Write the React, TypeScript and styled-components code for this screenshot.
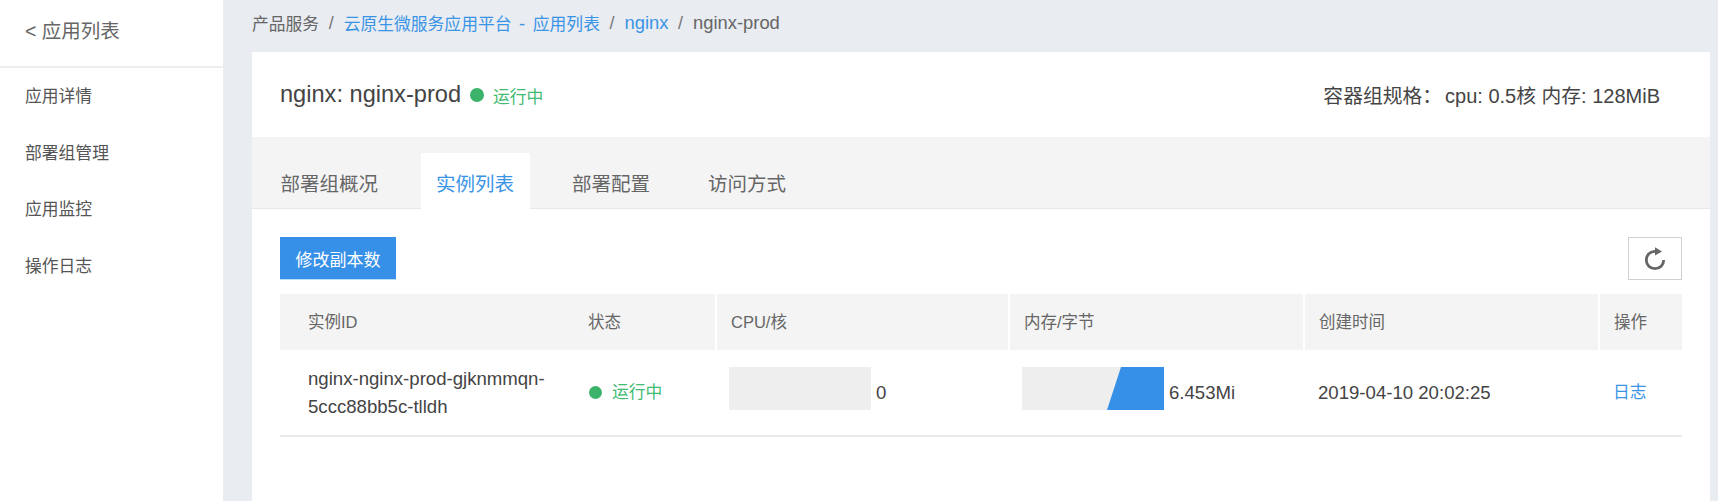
import styled, { createGlobalStyle } from "styled-components";

const GlobalStyle = createGlobalStyle`
    html, body {
        margin: 0;
        padding: 0;
        height: 100%;
        overflow: hidden;
    }
    body {
        font-family: "Liberation Sans", "Noto Sans CJK SC", sans-serif;
        color: #444;
    }
`;

const Page = styled.div`
    display: flex;
    width: 1718px;
    height: 501px;
    overflow: hidden;
    background: #e9ecf1;
`;

const Sidebar = styled.aside`
    width: 223px;
    flex-shrink: 0;
    background: #fff;
`;

const BackLink = styled.div`
    height: 66px;
    box-sizing: content-box;
    padding-left: 25px;
    display: flex;
    align-items: center;
    font-size: 19.5px;
    line-height: 60px;
    color: #666;
    border-bottom: 2px solid #eeeeee;

    span {
        margin-top: -4px;
    }
`;

const NavList = styled.ul`
    list-style: none;
    margin: 0;
    padding: 0;
`;

const NavItem = styled.li`
    height: 56.5px;
    box-sizing: border-box;
    padding: 0 0 2px 25px;
    display: flex;
    align-items: center;
    font-size: 16.8px;
    color: #555;
`;

const Main = styled.main`
    flex: 1;
    padding: 0 8px 0 29px;
    min-width: 0;
`;

// 영문은 한자보다 조금 크게 보인다
const Breadcrumb = styled.nav`
    height: 52px;
    padding-bottom: 6px;
    box-sizing: border-box;
    display: flex;
    align-items: center;
    font-size: 16.8px;
    color: #666;
`;

const Crumb = styled.span<{ $link?: boolean; $latin?: boolean }>`
    font-size: ${(props) => (props.$latin ? "18.4px" : "inherit")};
    color: ${(props) => (props.$link ? "#3a94e6" : "#666")};
`;

const Slash = styled.span`
    margin: 0 10px 0 9.5px;
    font-size: 18px;
    color: #777;
`;

const Dash = styled.span`
    margin: 0 7.6px;
    font-size: 18.4px;
`;

const Card = styled.section`
    background: #fff;
    height: 449px;
`;

const CardHead = styled.header`
    height: 85px;
    padding: 0 50px 0 28px;
    display: flex;
    align-items: center;
    justify-content: space-between;
`;

const TitleGroup = styled.div`
    display: flex;
    align-items: center;
`;

const Title = styled.h1`
    margin: 0 9px 0 0;
    font-size: 23.6px;
    font-weight: 400;
    color: #444;
`;

const Dot = styled.i<{ $size: number }>`
    display: block;
    width: ${(props) => props.$size}px;
    height: ${(props) => props.$size}px;
    border-radius: 50%;
    background: #3bb36a;
`;

const StatusText = styled.span`
    font-size: 16.8px;
    color: #3fbb72;
`;

const TitleStatus = styled(StatusText)`
    margin-left: 9px;
    padding-top: 3px;
`;

const Spec = styled.div`
    font-size: 20px;
    color: #444;
`;

const SpecLabel = styled.span<{ $gap?: number }>`
    margin-right: ${(props) => props.$gap ?? 0}px;
    font-size: 19.8px;
`;

const TabBar = styled.div`
    height: 72px;
    box-sizing: border-box;
    padding-left: 13px;
    display: flex;
    align-items: flex-end;
    background: #f4f4f5;
    border-bottom: 1px solid #e8e8e8;
`;

const Tab = styled.div<{ $active?: boolean }>`
    height: 56px;
    box-sizing: border-box;
    margin-right: 27px;
    margin-bottom: -1px;
    padding: 2px 15.5px 0;
    display: flex;
    align-items: center;
    font-size: 19.5px;
    color: ${(props) => (props.$active ? "#3a94e6" : "#666")};
    background: ${(props) => (props.$active ? "#fff" : "transparent")};
`;

const Content = styled.div`
    padding: 28px 28px 0;
`;

const Toolbar = styled.div`
    height: 57px;
    display: flex;
    align-items: flex-start;
    justify-content: space-between;
`;

const PrimaryButton = styled.button`
    width: 116px;
    height: 43px;
    padding: 0;
    border: none;
    border-bottom: 1px solid #b8dcf8;
    background: #3790e8;
    color: #fff;
    font-family: inherit;
    font-size: 17px;
`;

const IconButton = styled.button`
    width: 54px;
    height: 43px;
    padding: 0;
    display: flex;
    align-items: center;
    justify-content: center;
    background: #fff;
    border: 1.5px solid #d0d0d0;
`;

const Table = styled.table`
    width: 1402px;
    table-layout: fixed;
    border-collapse: collapse;
`;

const HeadCell = styled.th<{ $width: number; $first?: boolean; $plain?: boolean }>`
    width: ${(props) => props.$width}px;
    height: 56px;
    padding: 0 0 3px ${(props) => (props.$first ? 28 : 14)}px;
    box-sizing: border-box;
    background: #f4f4f4;
    border-right: 2px solid ${(props) => (props.$plain ? "#f4f4f4" : "#fff")};
    text-align: left;
    font-size: 16.5px;
    font-weight: 400;
    color: #666;

    &:last-child {
        border-right: none;
    }
`;

const BodyRow = styled.tr`
    border-bottom: 2px solid #eaeaea;
`;

const Cell = styled.td<{ $first?: boolean }>`
    height: 86px;
    padding: 0 0 0 ${(props) => (props.$first ? 28 : 14)}px;
    box-sizing: border-box;
    font-size: 18.6px;
    line-height: 28px;
    color: #444;
`;

const StatusCell = styled.div`
    display: flex;
    align-items: center;
    gap: 10px;
    margin-left: 2px;
`;

const Meter = styled.div`
    display: flex;
    align-items: center;
    gap: 5px;
    margin-left: -1px;
`;

const MeterChart = styled.svg`
    display: block;
    width: 142px;
    height: 43px;
    margin-bottom: 8px;
    background: #eeeeee;
`;

const LogLink = styled.span`
    font-size: 16.8px;
    color: #3a94e6;
`;

const columns = [
    { label: "实例ID", width: 293 },
    { label: "状态", width: 143 },
    { label: "CPU/核", width: 293 },
    { label: "内存/字节", width: 295 },
    { label: "创建时间", width: 295 },
    { label: "操作", width: 83 },
];

const navItems = ["应用详情", "部署组管理", "应用监控", "操作日志"];
const tabs = ["部署组概况", "实例列表", "部署配置", "访问方式"];

function App() {
    return (
        <Page>
            <GlobalStyle />
            <Sidebar>
                <BackLink>
                    <span>&lt; 应用列表</span>
                </BackLink>
                <NavList>
                    {navItems.map((item) => (
                        <NavItem key={item}>{item}</NavItem>
                    ))}
                </NavList>
            </Sidebar>
            <Main>
                <Breadcrumb>
                    <Crumb>产品服务</Crumb>
                    <Slash>/</Slash>
                    <Crumb $link>
                        云原生微服务应用平台<Dash>-</Dash>应用列表
                    </Crumb>
                    <Slash>/</Slash>
                    <Crumb $link $latin>
                        nginx
                    </Crumb>
                    <Slash>/</Slash>
                    <Crumb $latin>nginx-prod</Crumb>
                </Breadcrumb>
                <Card>
                    <CardHead>
                        <TitleGroup>
                            <Title>nginx: nginx-prod</Title>
                            <Dot $size={14} />
                            <TitleStatus>运行中</TitleStatus>
                        </TitleGroup>
                        <Spec>
                            <SpecLabel $gap={3}>容器组规格：</SpecLabel>cpu: 0.5<SpecLabel>核 内存</SpecLabel>: 128MiB
                        </Spec>
                    </CardHead>
                    <TabBar>
                        {tabs.map((tab) => (
                            <Tab key={tab} $active={tab === "实例列表"}>
                                {tab}
                            </Tab>
                        ))}
                    </TabBar>
                    <Content>
                        <Toolbar>
                            <PrimaryButton>修改副本数</PrimaryButton>
                            <IconButton aria-label="刷新">
                                <svg width="26" height="28" viewBox="0 0 26 28">
                                    <path
                                        d="M21.7 15a8.7 8.7 0 1 1-8.7-8.7"
                                        fill="none"
                                        stroke="#666"
                                        strokeWidth="2.8"
                                    />
                                    <path d="M13 2.2 20 6.4l-7 4.2z" fill="#666" />
                                </svg>
                            </IconButton>
                        </Toolbar>
                        <Table>
                            <thead>
                                <tr>
                                    {columns.map((column, index) => (
                                        <HeadCell
                                            key={column.label}
                                            $width={column.width}
                                            $first={index === 0}
                                            $plain={index === 0}
                                        >
                                            {column.label}
                                        </HeadCell>
                                    ))}
                                </tr>
                            </thead>
                            <tbody>
                                <BodyRow>
                                    <Cell $first>
                                        nginx-nginx-prod-gjknmmqn-
                                        <br />
                                        5ccc88bb5c-tlldh
                                    </Cell>
                                    <Cell>
                                        <StatusCell>
                                            <Dot $size={13} />
                                            <StatusText>运行中</StatusText>
                                        </StatusCell>
                                    </Cell>
                                    <Cell>
                                        <Meter>
                                            <MeterChart viewBox="0 0 142 43" />
                                            <span>0</span>
                                        </Meter>
                                    </Cell>
                                    <Cell>
                                        <Meter>
                                            <MeterChart viewBox="0 0 142 43">
                                                <polygon
                                                    points="99,0 142,0 142,43 85,43"
                                                    fill="#3790e8"
                                                />
                                            </MeterChart>
                                            <span>6.453Mi</span>
                                        </Meter>
                                    </Cell>
                                    <Cell>2019-04-10 20:02:25</Cell>
                                    <Cell>
                                        <LogLink>日志</LogLink>
                                    </Cell>
                                </BodyRow>
                            </tbody>
                        </Table>
                    </Content>
                </Card>
            </Main>
        </Page>
    );
}

export default App;
